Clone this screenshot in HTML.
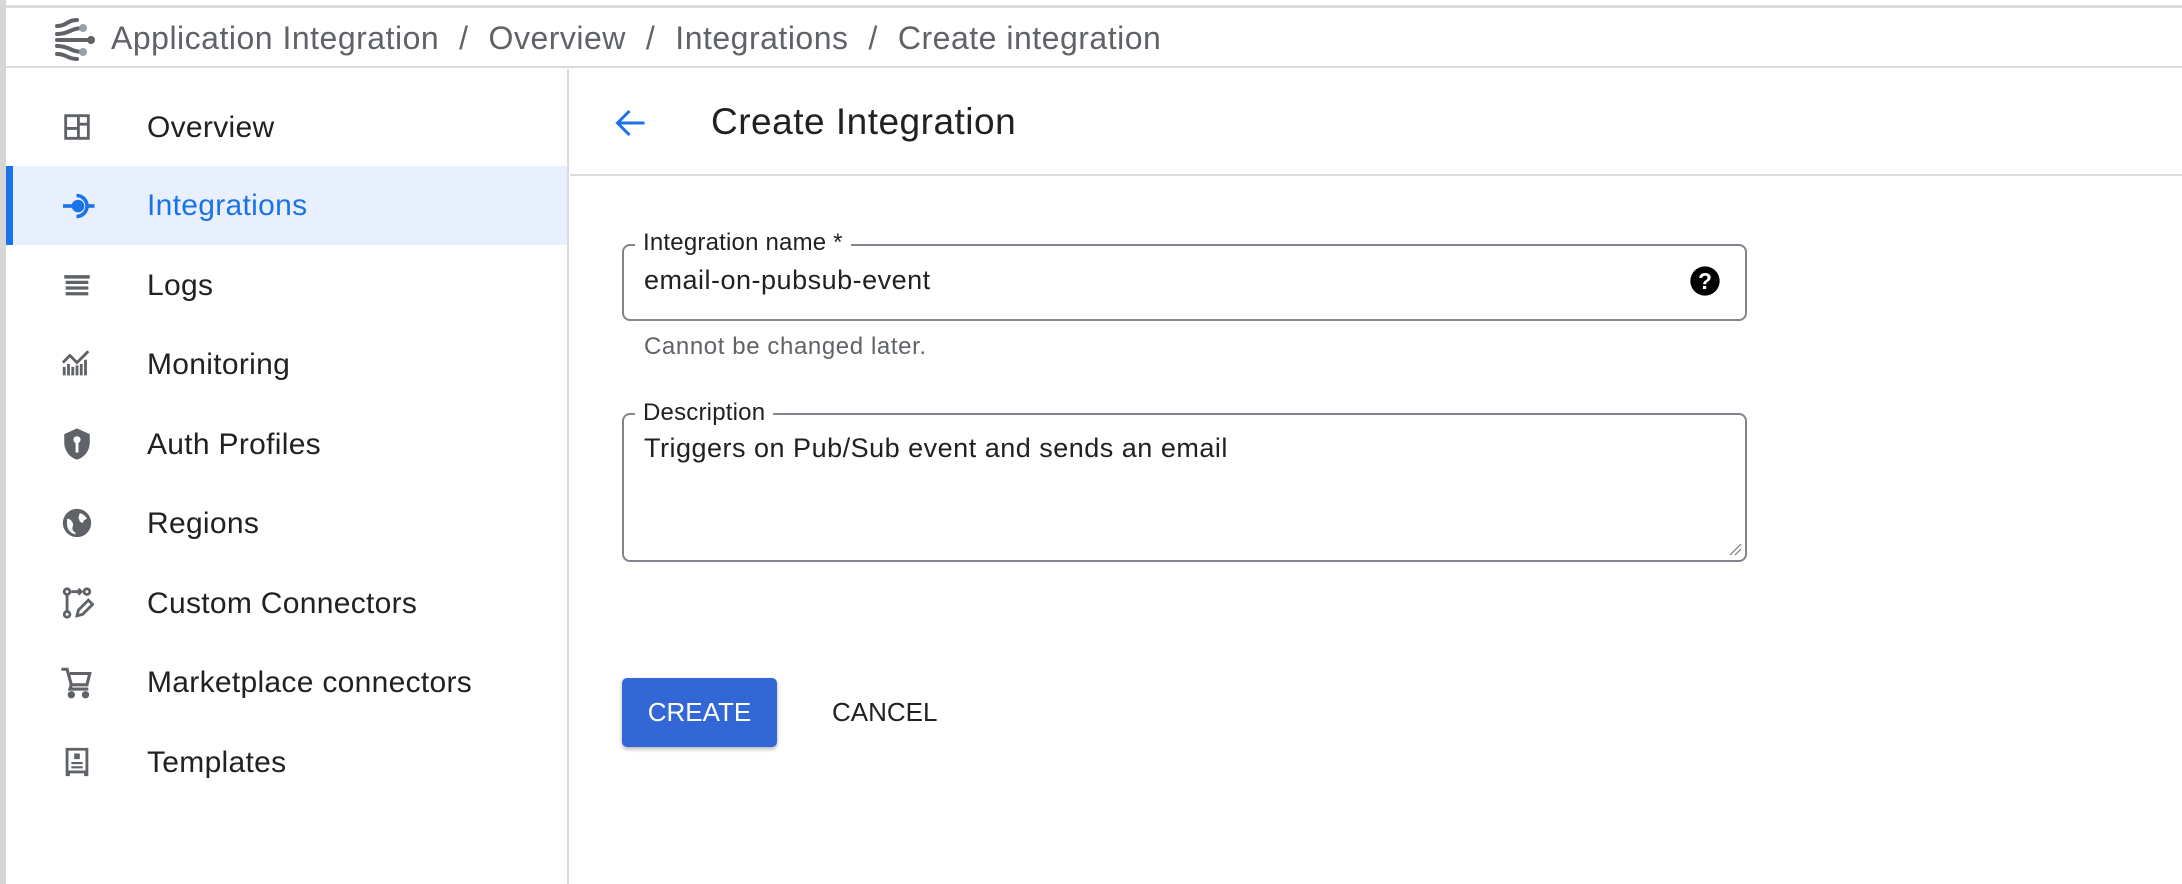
<!DOCTYPE html>
<html><head><style>
*{box-sizing:border-box;margin:0;padding:0}
body{width:2182px;height:884px;background:#fff;font-family:"Liberation Sans",Arial,sans-serif;position:relative;overflow:hidden;color:#202124}
.topline{position:absolute;left:0;top:0;width:2182px;height:8px;border-bottom:3px solid #dcdcdc}
.leftedge{position:absolute;left:0;top:0;width:6px;height:884px;background:#d6d6d6}
.header{position:absolute;left:6px;top:8px;right:0;height:60px;border-bottom:2px solid #dadce0}
.crumb{position:absolute;left:105px;top:12px;font-size:32px;color:#5f6368;white-space:nowrap;letter-spacing:0.5px}
.crumb span{margin:0 20px}
.side{position:absolute;left:6px;top:69px;width:563px;height:815px;border-right:2px solid #dadce0}
.item{position:absolute;left:0;width:561px;height:79px;font-size:30px;color:#202124;letter-spacing:0.3px}
.item .t{position:absolute;left:141px;top:23px}
.item svg{position:absolute;left:54px;top:22px}
.item.act{background:#e8f0fe;color:#1a73e8}
.item.act::before{content:"";position:absolute;left:0;top:0;width:7px;height:100%;background:#1a73e8}
.chead{position:absolute;left:570px;top:69px;right:0;height:107px;border-bottom:2px solid #dadce0}
.title{position:absolute;left:141px;top:32px;font-size:37px;color:#202124;letter-spacing:0.5px}
.box{position:absolute;left:622px;width:1125px;border:2px solid #80868b;border-radius:8px}
.lbl{position:absolute;background:#fff;padding:0 8px 0 8px;font-size:24px;color:#202124;letter-spacing:0.2px}
.val{position:absolute;font-size:27px;color:#202124;letter-spacing:0.5px}
.btn{position:absolute;left:622px;top:678px;width:155px;height:69px;background:#3367d6;border-radius:5px;box-shadow:0 2px 4px rgba(0,0,0,.3);color:#fff;font-size:26px;text-align:center;line-height:69px}
.cancel{position:absolute;left:832px;top:678px;line-height:69px;font-size:26px;color:#202124}
</style></head><body>
<div class="topline"></div>
<div class="leftedge"></div>
<div class="header">
<svg style="position:absolute;left:47px;top:8px" width="48" height="46" viewBox="0 0 48 46" fill="none" stroke="#5f6368" stroke-width="4" stroke-linecap="round">
<path d="M4 10 C14 10 14 4 24 4"/><path d="M4 18 C16 18 18 12 30 12"/><path d="M4 24 H36"/><path d="M4 30 C16 30 18 36 30 36"/><path d="M4 38 C14 38 14 43 24 43"/>
<circle cx="30" cy="12" r="4" fill="#9aa0a6" stroke="none"/><circle cx="38" cy="24" r="4" fill="#5f6368" stroke="none"/><circle cx="30" cy="36" r="4" fill="#9aa0a6" stroke="none"/>
</svg>
<div class="crumb">Application Integration<span>/</span>Overview<span>/</span>Integrations<span>/</span>Create integration</div>
</div>
<div class="side">
<div class="item" style="top:19px"><svg width="34" height="34" viewBox="0 0 24 24"><path fill="#5f6368" d="M3 3h18v18H3z"/><path fill="#fff" d="M5 5h7v7H5zM14 5h5v4h-5zM14 11h5v8h-5zM5 14h7v5H5z"/></svg><div class="t">Overview</div></div>
<div class="item act" style="top:97px"><svg width="36" height="36" viewBox="0 0 24 24" fill="none" stroke="#1a73e8" stroke-width="2.4"><path d="M2 12h7"/><circle cx="12" cy="12" r="3" fill="#1a73e8"/><path d="M11 5a7 7 0 1 1 0 14"/><path d="M19 12h4"/></svg><div class="t">Integrations</div></div>
<div class="item" style="top:177px"><svg width="34" height="34" viewBox="0 0 24 24" fill="#5f6368"><path d="M3 5h18v2.5H3zM4 9h16v2.3H4zM4 13h16v2.3H4zM4 17h16v2.3H4z"/></svg><div class="t">Logs</div></div>
<div class="item" style="top:256px"><svg width="34" height="34" viewBox="0 0 24 24" fill="#5f6368"><path d="M2 20h2v-6H2zM5 20h2v-8H5zM8 20h2v-6H8zM11 20h2v-7h-2zM14 20h2v-8h-2zM17 20h2V9h-2z"/><path d="M2 11l5-5 5 5 8-8" stroke="#5f6368" stroke-width="2" fill="none"/></svg><div class="t">Monitoring</div></div>
<div class="item" style="top:336px"><svg width="34" height="34" viewBox="0 0 24 24"><path fill="#5f6368" d="M12 1L3 5v6c0 5.5 3.8 10.7 9 12 5.2-1.3 9-6.5 9-12V5z"/><circle cx="12" cy="9" r="2.5" fill="#fff"/><path d="M11 11h2v7h-2z" fill="#fff"/></svg><div class="t">Auth Profiles</div></div>
<div class="item" style="top:415px"><svg width="34" height="34" viewBox="0 0 24 24"><circle cx="12" cy="12" r="10" fill="#5f6368"/><path fill="#fff" d="M5 9c2 0 3 1 4 3s-1 3 0 5 2 1 2 3c-3-.5-6-3-6-7zM14 5c2 .5 4 2 5 4l-2 1-1 2-2-1-1-3z"/></svg><div class="t">Regions</div></div>
<div class="item" style="top:495px"><svg width="34" height="34" viewBox="0 0 24 24" fill="none" stroke="#5f6368" stroke-width="2"><circle cx="5" cy="4" r="2"/><circle cx="5" cy="20" r="2"/><circle cx="19" cy="4" r="2"/><path d="M5 6v12M8 4h7M13 2l2 2-2 2M12 21l1-4 7-7 3 3-7 7z"/></svg><div class="t">Custom Connectors</div></div>
<div class="item" style="top:574px"><svg width="34" height="34" viewBox="0 0 24 24" fill="none" stroke="#5f6368" stroke-width="2.2"><path d="M1 3h4l3 11h11l2-8H7M8 14l-1 3h13"/><circle cx="8" cy="21" r="1.5" fill="#5f6368"/><circle cx="18" cy="21" r="1.5" fill="#5f6368"/></svg><div class="t">Marketplace connectors</div></div>
<div class="item" style="top:654px"><svg width="34" height="34" viewBox="0 0 24 24"><path fill="#5f6368" d="M4 2h16v20h-3v-2H7v2H4z"/><path fill="#fff" d="M6 4h12v14H6z"/><path fill="#5f6368" d="M10 6h4v4h-4zM8 12h8v1.5H8zM8 15h8v1.5H8z"/></svg><div class="t">Templates</div></div>
</div>
<div class="chead">
<svg style="position:absolute;left:42px;top:36px" width="38" height="36" viewBox="0 0 24 24" fill="none" stroke="#1a73e8" stroke-width="2"><path d="M21 12H4M11 4l-8 8 8 8"/></svg>
<div class="title">Create Integration</div>
</div>
<div class="box" style="top:244px;height:77px"></div>
<div class="lbl" style="left:635px;top:229px">Integration name *</div>
<div class="val" style="left:644px;top:265px">email-on-pubsub-event</div>
<svg style="position:absolute;left:1689px;top:265px" width="32" height="32" viewBox="0 0 24 24"><circle cx="12" cy="12" r="11" fill="#000"/><text x="12" y="18" text-anchor="middle" font-family="Liberation Sans" font-weight="bold" font-size="17" fill="#fff">?</text></svg>
<div style="position:absolute;left:644px;top:333px;font-size:24px;color:#5f6368;letter-spacing:0.6px">Cannot be changed later.</div>
<div class="box" style="top:413px;height:149px"></div>
<div class="lbl" style="left:635px;top:399px">Description</div>
<div class="val" style="left:644px;top:433px">Triggers on Pub/Sub event and sends an email</div>
<svg style="position:absolute;left:1728px;top:542px" width="14" height="14"><path d="M2 13L13 2M7 13l6-6" stroke="#777" stroke-width="1.2"/></svg>
<div class="btn">CREATE</div>
<div class="cancel">CANCEL</div>
</body></html>
